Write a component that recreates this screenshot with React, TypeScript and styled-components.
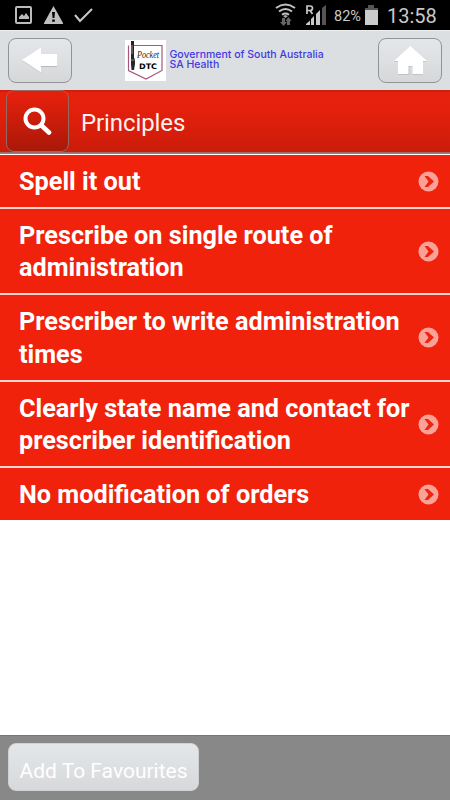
import React from "react";
import styled, { createGlobalStyle } from "styled-components";

const GlobalStyle = createGlobalStyle`
  * { box-sizing: border-box; }
  body { margin: 0; background: #fff; font-family: Roboto, "Liberation Sans", sans-serif; }
  svg { display: block; flex: none; }
`;

const Screen = styled.div`
  width: 450px;
  height: 800px;
  display: flex;
  flex-direction: column;
  overflow: hidden;
  background: #fff;
`;

const StatusBar = styled.div`
  height: 30px;
  flex: none;
  display: flex;
  align-items: center;
  justify-content: space-between;
  background: #000;
  color: #c9c9c9;
  padding: 0 14px 0 15px;
`;

const StatusGroup = styled.div`
  height: 30px;
  display: flex;
  align-items: center;
`;

const Battery = styled.span`
  width: 28px;
  margin: 3px 3px 0 8px;
  font-size: 14.5px;
  line-height: 20px;
  white-space: nowrap;
`;

const Clock = styled.span`
  width: 49px;
  margin: 2px 0 0 9px;
  font-size: 20px;
  line-height: 24px;
  white-space: nowrap;
`;

const Header = styled.header`
  height: 60px;
  flex: none;
  display: flex;
  align-items: center;
  justify-content: space-between;
  padding: 0 8px;
  border-top: 1px solid #eceff0;
  background: #dbdfe2;
`;

const NavButton = styled.button`
  width: 64px;
  height: 45px;
  margin-bottom: 1px;
  padding: 0;
  display: flex;
  align-items: center;
  justify-content: center;
  border: 1px solid #929394;
  border-radius: 8px;
  background: linear-gradient(#e4e7ea, #d6d7d9);
`;

const Brand = styled.div`
  width: 200px;
  display: flex;
  align-items: flex-start;
  gap: 4px;
  margin: 0 1px 1px 0;
`;

const BrandText = styled.div`
  display: flex;
  flex-direction: column;
  padding-top: 10px;
  font-family: Inter, "Liberation Sans", sans-serif;
  font-size: 10.5px;
  font-weight: 500;
  line-height: 10px;
  color: #4338e2;
  white-space: nowrap;
`;

const TitleBar = styled.div`
  height: 65px;
  flex: none;
  display: flex;
  padding-left: 6px;
  border-bottom: 1px solid #fff;
  background: linear-gradient(#c41d0b 0, #e6220d 3px, #e3200c 20px, #cb1c0a 62px, #96635e 62px, #a5837f 64px);
`;

const SearchButton = styled.button`
  width: 63px;
  height: 62px;
  padding: 0 1px 0 0;
  display: flex;
  align-items: center;
  justify-content: center;
  border: 1px solid #97685f;
  border-radius: 8px;
  background: linear-gradient(#e3200c 10%, #aa1809);
`;

const Title = styled.h1`
  margin: 0 0 0 12px;
  font-size: 24px;
  font-weight: 400;
  line-height: 66px;
  letter-spacing: -0.1px;
  color: #fff0ed;
`;

const List = styled.ul`
  flex: 1;
  margin: 0;
  padding: 0;
  list-style: none;
`;

const Row = styled.li<{ $height: number }>`
  height: ${(p) => p.$height}px;
  display: flex;
  align-items: center;
  justify-content: space-between;
  padding: 0 11px 0 19px;
  background: #f0220c;
  & + & { border-top: 2px solid #fbd5d0; }
`;

const RowLabel = styled.span`
  padding-top: 2.6px;
  font-size: 25.25px;
  font-weight: 700;
  line-height: 32.4px;
  color: #fff;
  white-space: pre;
`;

const Footer = styled.footer`
  height: 65px;
  flex: none;
  padding: 7px 8px;
  border-top: 1px solid #777;
  background: #888;
`;

const FavouriteButton = styled.button`
  width: 191px;
  height: 48px;
  padding: 7px 0 0;
  border: 1px solid #cfd1d2;
  border-radius: 8px;
  background: linear-gradient(#e3e7ea, #d7d8da);
  font: 400 21px/30px Roboto, "Liberation Sans", sans-serif;
  color: #fff;
  white-space: nowrap;
`;

const rows = [
  { text: "Spell it out", height: 52 },
  { text: "Prescribe on single route of\nadministration", height: 86 },
  { text: "Prescriber to write administration\ntimes", height: 87 },
  { text: "Clearly state name and contact for\nprescriber identification", height: 86 },
  { text: "No modification of orders", height: 54 },
];

const Notifications = () => (
  <svg width="80" height="30" viewBox="15 0 80 30">
    <rect x="16" y="7" width="15" height="16" rx="1" fill="none" stroke="#bbb" strokeWidth="2" />
    <path d="M19 19v-2l3-3 2 2 2-3 3 4v2z" fill="#bbb" />
    <path d="M53.5 6 63 23q.5 1-.5 1h-18q-1 0-.5-1z" fill="#c0c0c0" />
    <path d="M52 12h3l-.6 6h-1.8zM52.2 19.5h2.6v2.3h-2.6z" fill="#000" />
    <path d="m75 15 5 6 12-12" fill="none" stroke="#c8c8c8" strokeWidth="2" />
  </svg>
);

const Signals = () => (
  <svg width="53" height="30" viewBox="274 0 53 30">
    <g fill="none" stroke="#c2c2c2" strokeWidth="2">
      <path d="M277 8q9.500-7 19 0" />
      <path d="M280 11.500q6.500-5 13 0" />
      <path d="M283 14.700q3.500-2.500 7 0" />
    </g>
    <path d="m284 16 2.500-1 2.500 1-2.500 2z" fill="#aaa" />
    <path d="M283 18h3v4h2l-3.500 4-3.500-4h2zM290 25h-2v-4h-1.500l3-4 3 4H291v4z" fill="#666" />
    <path d="M308 14V6h3q2.500 0 2.500 2.200t-2.500 2.300h-3M311 10.500l2.500 3.500" fill="none" stroke="#c8c8c8" strokeWidth="1.700" />
    <path d="M307 25v-1l4-3.500V25zM312 25v-6l3-3v9zM317 25V14l4-4v15z" fill="#c9c9c9" />
    <path d="M323 25V8l4-3v20z" fill="#555" />
  </svg>
);

const BatteryIcon = () => (
  <svg width="13" height="30" viewBox="366 0 13 30">
    <path d="M369 5h6v3h4v3h-13V8h3z" fill="#555" />
    <path d="M366 10h13v15h-13z" fill="#ccc" />
  </svg>
);

const BackIcon = () => (
  <svg width="38" height="30" viewBox="21 45 38 30">
    <path d="m22.500 61 18.500-12.500V55h16v12H41v6z" fill="#b7babc" />
    <path d="M22 60 41 47.500V54h16v12H41v6.500z" fill="#fff" />
  </svg>
);

const HomeIcon = () => (
  <svg width="34" height="32" viewBox="393 44 34 32">
    <path d="m394 62 16.500-15 16 15h-4v13h-10v-8h-3v8h-11V62z" fill="#c0c3c5" />
    <path d="m394 61 16.300-15L427 61h-4v13h-10.500v-8h-4v8H398V61z" fill="#fff" />
  </svg>
);

const Logo = () => (
  <svg width="41" height="41" viewBox="0 0 41 41">
    <path d="M0 0h41v41H0z" fill="#fff" />
    <path d="M7 5.500h30v25L21 39 3.500 30.500v-25" fill="none" stroke="#a9577c" strokeWidth="1.200" />
    <path d="M6 1h3v17l1 1v5l-1 6H6.500L6 24V4z" fill="#252529" />
    <path d="M7 5v9M5.500 20H10" stroke="#aaa" strokeWidth=".8" />
    <text x="12" y="18" textLength="22" lengthAdjust="spacingAndGlyphs" fontFamily="Liberation Serif, serif" fontStyle="italic" fontSize="9.500" fill="#222">Pocket</text>
    <text x="14" y="29" textLength="18" lengthAdjust="spacingAndGlyphs" fontFamily="DejaVu Sans, sans-serif" fontWeight="700" fontSize="7.600" fill="#000">DTC</text>
  </svg>
);

const SearchIcon = () => (
  <svg width="30" height="30" viewBox="22 106 30 30">
    <circle cx="34.500" cy="118.500" r="9" fill="none" stroke="#fff" strokeWidth="4" />
    <path d="m41.500 125.500 7.500 7" stroke="#fff" strokeWidth="4.600" strokeLinecap="round" />
  </svg>
);

const ChevronIcon = () => (
  <svg width="21" height="21" viewBox="0 0 21 21">
    <circle cx="10.500" cy="10.500" r="10" fill="#faa198" />
    <path d="M6.500 5H10l6 5.500-6 5.500H6.500l4-5.500z" fill="#ee240f" />
  </svg>
);

export default function App() {
  return (
    <Screen>
      <GlobalStyle />
      <StatusBar>
        <StatusGroup><Notifications /></StatusGroup>
        <StatusGroup>
          <Signals />
          <Battery>82%</Battery>
          <BatteryIcon />
          <Clock>13:58</Clock>
        </StatusGroup>
      </StatusBar>
      <Header>
        <NavButton aria-label="Back"><BackIcon /></NavButton>
        <Brand>
          <Logo />
          <BrandText>
            <div>Government of South Australia</div>
            <div>SA Health</div>
          </BrandText>
        </Brand>
        <NavButton aria-label="Home"><HomeIcon /></NavButton>
      </Header>
      <TitleBar>
        <SearchButton aria-label="Search"><SearchIcon /></SearchButton>
        <Title>Principles</Title>
      </TitleBar>
      <List>
        {rows.map((row) => (
          <Row key={row.text} $height={row.height}>
            <RowLabel>{row.text}</RowLabel>
            <ChevronIcon />
          </Row>
        ))}
      </List>
      <Footer><FavouriteButton>Add To Favourites</FavouriteButton></Footer>
    </Screen>
  );
}
